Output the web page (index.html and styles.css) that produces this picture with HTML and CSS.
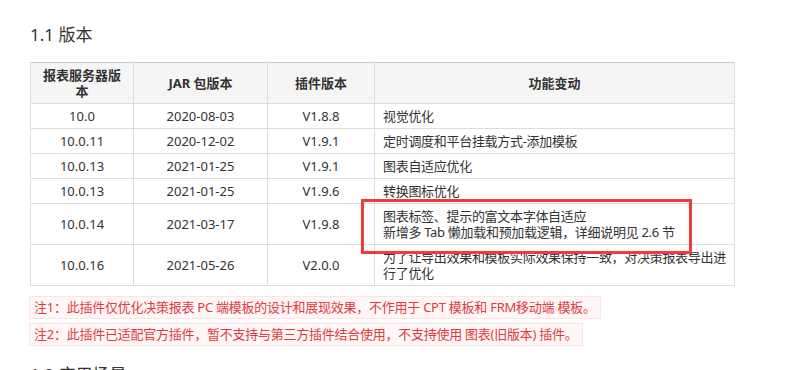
FILE: index.html
```html
<!DOCTYPE html>
<html lang="zh-CN">
<head>
<meta charset="utf-8">
<title>1.1 版本</title>
<link rel="stylesheet" href="styles.css">
</head>
<body>
<div class="page">
  <h3 class="heading">1.1 版本</h3>
  <table class="versions">
    <colgroup>
      <col class="c1"><col class="c2"><col class="c3"><col class="c4">
    </colgroup>
    <thead>
      <tr><th>报表服务器版本</th><th>JAR 包版本</th><th>插件版本</th><th>功能变动</th></tr>
    </thead>
    <tbody>
      <tr><td>10.0</td><td>2020-08-03</td><td>V1.8.8</td><td class="desc">视觉优化</td></tr>
      <tr><td>10.0.11</td><td>2020-12-02</td><td>V1.9.1</td><td class="desc">定时调度和平台挂载方式-添加模板</td></tr>
      <tr><td>10.0.13</td><td>2021-01-25</td><td>V1.9.1</td><td class="desc">图表自适应优化</td></tr>
      <tr><td>10.0.13</td><td>2021-01-25</td><td>V1.9.6</td><td class="desc">转换图标优化</td></tr>
      <tr><td>10.0.14</td><td>2021-03-17</td><td>V1.9.8</td><td class="desc">图表标签、提示的富文本字体自适应<br>新增多 Tab 懒加载和预加载逻辑，详细说明见 2.6 节</td></tr>
      <tr><td>10.0.16</td><td>2021-05-26</td><td>V2.0.0</td><td class="desc">为了让导出效果和模板实际效果保持一致，对决策报表导出进行了优化</td></tr>
    </tbody>
  </table>
  <div class="notes">
    <p class="note">注1：此插件仅优化决策报表 PC 端模板的设计和展现效果，不作用于 CPT 模板和 FRM移动端 模板。</p>
    <p class="note">注2：此插件已适配官方插件，暂不支持与第三方插件结合使用，不支持使用 图表(旧版本) 插件。</p>
  </div>
  <h3 class="heading next">1.2 应用场景</h3>
  <div class="mark"></div>
</div>
</body>
</html>
```
FILE: styles.css
```css
html, body {
  margin: 0;
  padding: 0;
  background: #fff;
}
body {
  font-family: "Noto Sans", "Noto Sans CJK SC", sans-serif;
  color: #333;
  font-size: 13px;
  overflow: hidden;
}
.page {
  position: relative;
  padding: 23px 0 0 30px;
}
.heading {
  margin: 0 0 15px 0;
  font-size: 17px;
  line-height: 24px;
  font-weight: normal;
  color: #333;
}
.heading.next {
  margin-top: 17px;
}
.versions {
  border-collapse: collapse;
  table-layout: fixed;
  width: 704px;
  font-size: 13px;
  line-height: 16px;
}
.c1 { width: 103px; }
.c2 { width: 134px; }
.c3 { width: 107px; }
.c4 { width: 360px; }
.versions th, .versions td {
  border: 1px solid #ddd;
  padding: 4px 8px;
  text-align: center;
  vertical-align: middle;
  color: #333;
}
.versions th {
  background: #f5f5f5;
  font-weight: bold;
  border-top-color: #ccc;
}
.versions td.desc {
  text-align: left;
  padding-right: 3px;
  letter-spacing: -0.3px;
}
.notes {
  margin-top: 10px;
  display: flex;
  flex-direction: column;
  align-items: flex-start;
  gap: 4px;
  margin-left: -1px;
}
.note {
  margin: 0;
  padding: 2px 4px;
  line-height: 17px;
  font-size: 13px;
  letter-spacing: -0.25px;
  color: #e4393c;
  background: #fff7f7;
  border: 1px solid #fde3e3;
}
.mark {
  position: absolute;
  left: 361px;
  top: 199px;
  width: 325px;
  height: 49px;
  border: 3px solid #f23a3a;
}
```
